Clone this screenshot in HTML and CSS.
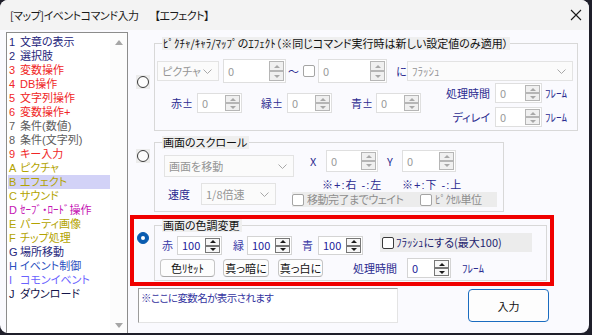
FILE: index.html
```html
<!DOCTYPE html>
<html lang="ja">
<head>
    <meta charset="UTF-8">
    <meta name="viewport" content="width=device-width, initial-scale=1.0">
    <title>[マップ]イベントコマンド入力 【エフェクト】</title>
    <link rel="stylesheet" href="styles.css">
</head>
<body>

    <div class="window">
        <!-- タイトルバー -->
        <div class="titlebar">
            <div class="title"><span>[マップ]イベントコマンド入力</span><span>【エフェクト】</span></div>
            <svg class="close" width="12" height="12" viewBox="0 0 12 12"><path d="M1 1L11 11M11 1L1 11" stroke="#1a1a1a" stroke-width="1.1" fill="none"/></svg>
        </div>

        <div class="client">
            <!-- コマンド一覧 -->
            <div class="cmdlist">
                <ul>
                    <li class="c-navy"><span class="key">1</span>文章の表示</li>
                    <li class="c-navy"><span class="key">2</span>選択肢</li>
                    <li class="c-red"><span class="key">3</span>変数操作</li>
                    <li class="c-red"><span class="key">4</span>DB操作</li>
                    <li class="c-red"><span class="key">5</span>文字列操作</li>
                    <li class="c-red"><span class="key">6</span>変数操作+</li>
                    <li class="c-gray"><span class="key">7</span>条件(数値)</li>
                    <li class="c-gray"><span class="key">8</span>条件(文字列)</li>
                    <li class="c-red"><span class="key">9</span>キー入力</li>
                    <li class="c-olive"><span class="key">A</span>ピクチャ</li>
                    <li class="c-olive selected"><span class="key">B</span>エフェクト</li>
                    <li class="c-olive"><span class="key">C</span>サウンド</li>
                    <li class="c-magenta"><span class="key">D</span>ｾｰﾌﾞ・ﾛｰﾄﾞ操作</li>
                    <li class="c-olive"><span class="key">E</span>パーティ画像</li>
                    <li class="c-olive"><span class="key">F</span>チップ処理</li>
                    <li class="c-navy"><span class="key">G</span>場所移動</li>
                    <li class="c-blue"><span class="key">H</span>イベント制御</li>
                    <li class="c-violet"><span class="key">I</span>コモンイベント</li>
                    <li class="c-dark"><span class="key">J</span>ダウンロード</li>
                </ul>
                <div class="scroll"><i class="tri-up"></i><i class="tri-dn"></i></div>
            </div>

            <div class="panel">
                <!-- ピクチャ/キャラ/マップのエフェクト -->
                <div class="option opt-effect">
                    <div class="radio-cell"><div class="radio-box"><span class="radio"></span></div></div>
                    <fieldset class="group g-effect">
                        <legend>ﾋﾟｸﾁｬ/ｷｬﾗ/ﾏｯﾌﾟのｴﾌｪｸﾄ（※同じコマンド実行時は新しい設定値のみ適用）</legend>
                        <div class="row fx-top">
                            <div class="combo cb-pic">ピクチャ<svg width="9" height="5" viewBox="0 0 9 5"><polyline points="0.5,0.5 4.5,4.5 8.5,0.5" fill="none" stroke="#a8a8a8"/></svg></div>
                            <div class="spin s-a"><span class="val">0</span><span class="arrows"><i class="up"></i><i class="dn"></i></span></div>
                            <span class="lbl fx-tilde">〜</span>
                            <span class="check"></span>
                            <div class="spin s-b"><span class="val">0</span><span class="arrows"><i class="up"></i><i class="dn"></i></span></div>
                            <span class="lbl fx-ni">に</span>
                            <div class="combo cb-kind">ﾌﾗｯｼｭ<svg width="9" height="5" viewBox="0 0 9 5"><polyline points="0.5,0.5 4.5,4.5 8.5,0.5" fill="none" stroke="#a8a8a8"/></svg></div>
                        </div>
                        <div class="row fx-bottom">
                            <div class="row fx-colors">
                                <span class="lbl r fx-c1">赤±</span>
                                <div class="spin s-c"><span class="val">0</span><span class="arrows"><i class="up"></i><i class="dn"></i></span></div>
                                <span class="lbl r fx-c2">緑±</span>
                                <div class="spin s-c"><span class="val">0</span><span class="arrows"><i class="up"></i><i class="dn"></i></span></div>
                                <span class="lbl r fx-c3">青±</span>
                                <div class="spin s-c"><span class="val">0</span><span class="arrows"><i class="up"></i><i class="dn"></i></span></div>
                            </div>
                            <div class="fx-timing">
                                <div class="row">
                                    <span class="lbl r fx-t">処理時間</span>
                                    <div class="spin s-t"><span class="val">0</span><span class="arrows"><i class="up"></i><i class="dn"></i></span></div>
                                    <span class="lbl frame">ﾌﾚｰﾑ</span>
                                </div>
                                <div class="row">
                                    <span class="lbl r fx-t">ディレイ</span>
                                    <div class="spin s-t"><span class="val">0</span><span class="arrows"><i class="up"></i><i class="dn"></i></span></div>
                                    <span class="lbl frame">ﾌﾚｰﾑ</span>
                                </div>
                            </div>
                        </div>
                    </fieldset>
                </div>

                <!-- 画面のスクロール -->
                <div class="option opt-scroll">
                    <div class="radio-cell"><div class="radio-box"><span class="radio"></span></div></div>
                    <fieldset class="group g-scroll">
                        <legend>画面のスクロール</legend>
                        <div class="sc-body">
                            <div class="sc-left">
                                <div class="combo cb-move">画面を移動<svg width="9" height="5" viewBox="0 0 9 5"><polyline points="0.5,0.5 4.5,4.5 8.5,0.5" fill="none" stroke="#a8a8a8"/></svg></div>
                                <div class="row sc-speed">
                                    <span class="lbl sc-speed-lbl">速度</span>
                                    <div class="combo cb-speed">1/8倍速<svg width="9" height="5" viewBox="0 0 9 5"><polyline points="0.5,0.5 4.5,4.5 8.5,0.5" fill="none" stroke="#a8a8a8"/></svg></div>
                                </div>
                            </div>
                            <div class="sc-right">
                                <div class="row sc-xy">
                                    <span class="lbl sc-x">X</span>
                                    <div class="spin s-x"><span class="val">0</span><span class="arrows"><i class="up"></i><i class="dn"></i></span></div>
                                    <span class="lbl sc-y">Y</span>
                                    <div class="spin s-y"><span class="val">0</span><span class="arrows"><i class="up"></i><i class="dn"></i></span></div>
                                </div>
                                <div class="row sc-notes">
                                    <span class="lbl sc-n1">※+:右 -:左</span>
                                    <span class="lbl">※+:下 -:上</span>
                                </div>
                                <div class="row cbar sc-bar">
                                    <span class="row sc-wait"><span class="check"></span><span class="dim">移動完了までウェイト</span></span>
                                    <span class="row"><span class="check"></span><span class="dim">ﾋﾟｸｾﾙ単位</span></span>
                                </div>
                            </div>
                        </div>
                    </fieldset>
                </div>

                <!-- 画面の色調変更 -->
                <div class="option opt-tone">
                    <div class="radio-cell"><div class="radio-box plain"><span class="radio on"></span></div></div>
                    <fieldset class="group g-tone">
                        <legend>画面の色調変更</legend>
                        <div class="row tn-top">
                            <span class="lbl tn-c1">赤</span>
                            <div class="spin on s-tone"><span class="val">100</span><span class="arrows"><i class="up"></i><i class="dn"></i></span></div>
                            <span class="lbl tn-c2">緑</span>
                            <div class="spin on s-tone"><span class="val">100</span><span class="arrows"><i class="up"></i><i class="dn"></i></span></div>
                            <span class="lbl tn-c3">青</span>
                            <div class="spin on s-tone"><span class="val">100</span><span class="arrows"><i class="up"></i><i class="dn"></i></span></div>
                            <div class="row cbar tn-flash"><span class="check on"></span><span class="tn-flash-txt">ﾌﾗｯｼｭにする(最大100)</span></div>
                        </div>
                        <div class="row tn-bottom">
                            <button class="btn b-reset">色ﾘｾｯﾄ</button>
                            <button class="btn b-dark">真っ暗に</button>
                            <button class="btn b-white">真っ白に</button>
                            <span class="lbl r tn-time">処理時間</span>
                            <div class="spin on s-tt"><span class="val">0</span><span class="arrows"><i class="up"></i><i class="dn"></i></span></div>
                            <span class="lbl tn-frame">ﾌﾚｰﾑ</span>
                        </div>
                    </fieldset>
                </div>

                <div class="footer">
                    <div class="varbox">※ここに変数名が表示されます</div>
                    <button class="okbtn">入力</button>
                </div>
            </div>
        </div>
    </div>

</body>
</html>
```

FILE: styles.css
```css
* {
    box-sizing: border-box;
}

body {
    margin: 0;
    width: 592px;
    height: 335px;
    overflow: hidden;
    background: #1f1f2a;
    font-family: "Noto Sans CJK JP", "Noto Sans", sans-serif;
    font-size: 11px;
    font-feature-settings: "palt";
    color: #1a1a1a;
}

.window {
    width: 589px;
    height: 333px;
    background: #fafafe;
    border-radius: 8px;
    overflow: hidden;
    display: flex;
    flex-direction: column;
}

/* タイトルバー */
.titlebar {
    flex: none;
    height: 30px;
    background: #f3f3f3;
    display: flex;
    align-items: center;
    justify-content: space-between;
    padding: 0 7px 0 10px;
}

.title {
    font-size: 11px;
    letter-spacing: -0.5px;
    line-height: 16px;
    display: flex;
    gap: 16px;
}

.close {
    display: block;
}

.client {
    flex: 1;
    display: flex;
    min-height: 0;
}

/* コマンド一覧 */
.cmdlist {
    flex: none;
    margin: 2px 0 0 6px;
    width: 122px;
    height: 301px;
    border: 1px solid #8c8c8c;
    border-bottom: none;
    background: #fff;
    display: flex;
}

.cmdlist ul {
    flex: 1;
    margin: 0;
    padding: 2px 0 0 1px;
    list-style: none;
    font-family: "Liberation Sans", "Noto Sans CJK JP", sans-serif;
}

.cmdlist li {
    height: 14px;
    line-height: 14px;
    padding-left: 1px;
    white-space: nowrap;
}

.cmdlist .key {
    display: inline-block;
    width: 11px;
}

.cmdlist li.selected {
    background: #d2d2f7;
}

.c-navy { color: #26267c; }
.c-red { color: #f02626; }
.c-gray { color: #5c5c5c; }
.c-olive { color: #b3a300; }
.c-magenta { color: #c514b4; }
.c-blue { color: #2a4fc0; }
.c-violet { color: #6a62ff; }
.c-dark { color: #14144a; }

.scroll {
    width: 17px;
    background: #fcfcfc;
    display: flex;
    flex-direction: column;
    align-items: center;
}

.tri-up,
.tri-dn {
    width: 0;
    height: 0;
    border-left: 4px solid transparent;
    border-right: 4px solid transparent;
}

.tri-up {
    margin-top: 7px;
    border-bottom: 5px solid #a6a6a6;
}

.tri-dn {
    margin-top: auto;
    margin-bottom: 5px;
    border-top: 5px solid #a6a6a6;
}

/* 右側のパネル */
.panel {
    flex: 1;
    padding-left: 2px;
    display: flex;
    flex-direction: column;
}

.option {
    display: flex;
    padding-left: 6px;
}

.opt-effect { margin-top: 7px; }
.opt-scroll { margin-top: 5px; }

.opt-tone {
    margin-top: 3px;
    width: 424px;
    height: 71px;
    border: 4px solid #f00000;
    padding-left: 2px;
}

.radio-cell {
    flex: none;
    width: 18px;
}

.radio-box {
    width: 14px;
    height: 14px;
    background: #ececec;
    display: flex;
    align-items: center;
    justify-content: center;
}

.radio-box.plain {
    background: none;
}

.opt-effect .radio-box { margin-top: 38px; }
.opt-scroll .radio-box { margin-top: 13px; }
.opt-tone .radio-box { margin-top: 12px; }

.radio {
    width: 12px;
    height: 12px;
    border-radius: 50%;
    border: 1px solid #3a3a3a;
    background: #fdfdfd;
}

.radio.on {
    border-color: #0a5cb0;
    background: #0a5cb0;
    display: flex;
    align-items: center;
    justify-content: center;
}

.radio.on::after {
    content: "";
    width: 4px;
    height: 4px;
    border-radius: 50%;
    background: #fff;
}

/* グループ枠 */
.group {
    margin: 0;
    padding: 0 0 0 7px;
    border: 1px solid #d8d8d8;
    min-width: 0;
}

.group legend {
    margin: 0;
    padding: 0 2px 0 1px;
    background: #efefef;
    line-height: 13px;
    color: #111;
}

.g-effect { width: 424px; height: 94px; }
.g-scroll { width: 350px; height: 76px; }
.g-tone { width: 393px; height: 62px; }

.row {
    display: flex;
    align-items: center;
}

.lbl {
    flex: none;
    white-space: nowrap;
    line-height: 13px;
    color: #2b2b90;
}

.lbl.r {
    text-align: right;
}

/* スピン */
.spin {
    flex: none;
    display: flex;
    justify-content: space-between;
    border: 1px solid #dfdfdf;
    background: #fff;
    padding: 1px;
}

.spin .val {
    align-self: center;
    padding-left: 3px;
    line-height: 13px;
    color: #9a9a9a;
}

.spin .arrows {
    width: 15px;
    display: flex;
    flex-direction: column;
}

.spin .arrows i {
    flex: 1;
    border: 1px solid #b6b6b6;
    background: #f0f0f0;
    display: flex;
    align-items: center;
    justify-content: center;
}

.spin .arrows i::after {
    content: "";
    width: 0;
    height: 0;
    border-left: 3px solid transparent;
    border-right: 3px solid transparent;
}

.spin .up::after { border-bottom: 3px solid #a8a8a8; }
.spin .dn::after { border-top: 3px solid #a8a8a8; }

.spin.on {
    border-color: #d4d4d4;
}

.spin.on .val {
    color: #22229a;
}

.spin.on .arrows i {
    border-color: #777;
    background: #f7f7f7;
}

.spin.on .up::after { border-bottom-color: #1a1a1a; }
.spin.on .dn::after { border-top-color: #1a1a1a; }

.s-a { width: 63px; height: 24px; }
.s-b { width: 69px; height: 24px; }
.s-c { width: 45px; height: 20px; }
.s-t { width: 47px; height: 20px; }
.s-x { width: 52px; height: 22px; }
.s-y { width: 54px; height: 22px; }
.s-tone { width: 45px; height: 19px; }
.s-tt { width: 44px; height: 20px; }

/* コンボ */
.combo {
    flex: none;
    display: flex;
    align-items: center;
    justify-content: space-between;
    border: 1px solid #e3e3e3;
    background: #fbfbfb;
    color: #959595;
    padding: 0 6px 0 4px;
    line-height: 13px;
}

.combo svg {
    display: block;
}

.cb-pic { width: 62px; height: 20px; margin-left: -5px; }
.cb-kind { width: 166px; height: 20px; }
.cb-move { width: 130px; height: 22px; }
.cb-speed { width: 75px; height: 22px; }

.check {
    flex: none;
    width: 12px;
    height: 12px;
    border: 1px solid #a4a4a4;
    border-radius: 2px;
    background: #fff;
}

.check.on {
    border-color: #3a3a3a;
}

.cbar {
    background: #ececec;
}

.dim {
    margin-left: 3px;
    color: #8e8e8e;
    line-height: 13px;
    letter-spacing: -0.5px;
}

/* エフェクト */
.fx-top {
    margin-top: 9px;
    height: 24px;
}

.s-a { margin-left: 4px; }
.fx-tilde { width: 17px; padding-left: 2px; }
.s-b { margin-left: 3px; }
.fx-ni { width: 20px; padding-left: 9px; }

.fx-bottom {
    align-items: flex-start;
}

.fx-colors {
    margin-top: 10px;
}

.fx-c1 { width: 35px; padding-right: 4px; }
.fx-c2 { width: 45px; padding-right: 4px; }
.fx-c3 { width: 44px; padding-right: 3px; }

.fx-timing {
    margin-left: 15px;
    display: flex;
    flex-direction: column;
    gap: 4px;
}

.fx-t { width: 59px; padding-right: 5px; }

.frame { margin-left: 3px; }

/* スクロール */
.sc-body {
    margin-top: 1px;
    display: flex;
}

.sc-left {
    flex: none;
    width: 130px;
    padding: 5px 0 0 2px;
}

.sc-speed {
    margin-top: 6px;
}

.sc-speed-lbl { width: 37px; padding-left: 4px; }

.sc-right {
    display: flex;
    flex-direction: column;
}

.sc-x { width: 34px; padding-left: 18px; }
.sc-y { width: 24px; padding-left: 9px; }

.sc-notes {
    margin-top: 7px;
    height: 13px;
}

.sc-notes .lbl {
    font-family: "Liberation Sans", "Noto Sans CJK JP", sans-serif;
    letter-spacing: 1px;
}

.sc-n1 { width: 110px; padding-left: 30px; }

.sc-bar {
    width: 205px;
    height: 15px;
}

.sc-wait { width: 128px; }

/* 色調変更 */
.tn-top {
    margin-top: 4px;
    align-items: flex-start;
}

.tn-top .lbl {
    line-height: 19px;
    color: #3a3aa6;
}

.tn-c1 { width: 15px; }
.tn-c2 { width: 25px; padding-left: 11px; }
.tn-c3 { width: 26px; padding-left: 10px; }

.tn-flash {
    margin: -3px 0 0 17px;
    width: 152px;
    height: 19px;
    padding-left: 2px;
}

.tn-flash-txt {
    margin-left: 2px;
    line-height: 13px;
    color: #1e1e6e;
}

.tn-bottom {
    margin-top: 3px;
    height: 20px;
}

.btn {
    flex: none;
    height: 18px;
    padding: 0;
    font: inherit;
    line-height: 13px;
    color: #111;
    background: #fdfdfd;
    border: 1px solid #c6c6c6;
    border-bottom-color: #a9a9a9;
    border-radius: 4px;
}

.b-reset { width: 55px; margin-left: -2px; }
.b-dark { width: 46px; margin-left: 8px; }
.b-white { width: 45px; margin-left: 9px; }

.tn-time { width: 84px; padding-right: 10px; }
.tn-frame { margin-left: 11px; }

/* 下部 */
.footer {
    margin-top: 2px;
    display: flex;
    align-items: flex-start;
}

.varbox {
    margin-left: 8px;
    width: 260px;
    height: 35px;
    padding: 2px 2px;
    background: #fff;
    border: 1px solid #e4e4e4;
    border-top-color: #9c9c9c;
    border-left-color: #9c9c9c;
    color: #3434a0;
    font-size: 10.5px;
    letter-spacing: -0.6px;
    line-height: 14px;
}

.okbtn {
    margin: 1px 0 0 70px;
    width: 81px;
    height: 33px;
    padding: 0;
    font: inherit;
    color: #111;
    background: #fdfdfd;
    border: 1px solid #1a6cc0;
    border-radius: 4px;
}
```
